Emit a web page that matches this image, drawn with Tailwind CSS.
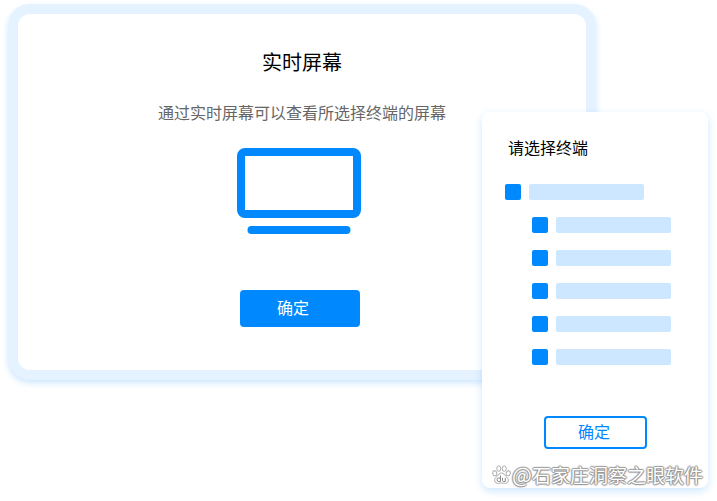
<!DOCTYPE html>
<html lang="zh-CN">

<head>
    <meta charset="UTF-8">
    <meta name="viewport" content="width=device-width, initial-scale=1">
    <title>实时屏幕</title>
    <script src="https://cdn.jsdelivr.net/npm/@tailwindcss/browser@4"></script>
</head>

<body class="bg-white font-['Noto_Sans_CJK_SC',sans-serif]">
    <div class="relative min-h-screen pt-1 pl-2 pr-[121px]">
        <!-- Live screen -->
        <main class="flex flex-col items-center rounded-[22px] border-10 border-[#e5f2ff] bg-white pt-[34px] pb-[43px] shadow-[0_3px_6px_#0088ff33]">
            <h1 class="text-xl leading-7 text-black">实时屏幕</h1>
            <p class="mt-6 text-base leading-6 text-[#666666]">通过实时屏幕可以查看所选择终端的屏幕</p>
            <svg class="mt-6 mr-1.5 h-[86px] w-[124px]" viewBox="0 0 124 86" fill="none" aria-hidden="true">
                <path fill="#0088ff" fill-rule="evenodd" d="M8 0H116a8 8 0 0 1 8 8V62a8 8 0 0 1-8 8H8a8 8 0 0 1-8-8V8a8 8 0 0 1 8-8ZM8 8V62H116V8Z" />
                <rect x="10.500" y="78" width="103" height="8" rx="4" fill="#0088ff" />
            </svg>
            <button type="button" class="mt-14 mr-1 h-[37px] w-[120px] rounded bg-[#0088ff] pr-3.5 pb-1 text-base leading-6 text-white">确定</button>
        </main>

        <!-- Terminal picker -->
        <form class="absolute top-28 right-[9px] w-[226px] rounded-lg bg-white pt-[23px] pb-[39px] shadow-[0_3px_8px_#0088ff33]">
            <h2 class="pl-[26px] text-base leading-6 text-black">请选择终端</h2>
            <ul class="mt-[25px] flex flex-col gap-[17px] pl-[23px]">
                <li class="flex gap-2">
                    <input id="group" type="checkbox" class="size-4 appearance-none rounded-xs bg-[#0088ff]">
                    <label for="group" aria-label="全部终端" class="h-4 w-[115px] rounded-xs bg-[#cce7ff]"></label>
                </li>
                <li class="flex gap-2 pl-[27px]">
                    <input id="t1" type="checkbox" class="size-4 appearance-none rounded-xs bg-[#0088ff]">
                    <label for="t1" aria-label="终端 1" class="h-4 w-[115px] rounded-xs bg-[#cce7ff]"></label>
                </li>
                <li class="flex gap-2 pl-[27px]">
                    <input id="t2" type="checkbox" class="size-4 appearance-none rounded-xs bg-[#0088ff]">
                    <label for="t2" aria-label="终端 2" class="h-4 w-[115px] rounded-xs bg-[#cce7ff]"></label>
                </li>
                <li class="flex gap-2 pl-[27px]">
                    <input id="t3" type="checkbox" class="size-4 appearance-none rounded-xs bg-[#0088ff]">
                    <label for="t3" aria-label="终端 3" class="h-4 w-[115px] rounded-xs bg-[#cce7ff]"></label>
                </li>
                <li class="flex gap-2 pl-[27px]">
                    <input id="t4" type="checkbox" class="size-4 appearance-none rounded-xs bg-[#0088ff]">
                    <label for="t4" aria-label="终端 4" class="h-4 w-[115px] rounded-xs bg-[#cce7ff]"></label>
                </li>
                <li class="flex gap-2 pl-[27px]">
                    <input id="t5" type="checkbox" class="size-4 appearance-none rounded-xs bg-[#0088ff]">
                    <label for="t5" aria-label="终端 5" class="h-4 w-[115px] rounded-xs bg-[#cce7ff]"></label>
                </li>
            </ul>
            <button type="button" class="mx-auto mt-[51px] block h-[33px] w-[103px] rounded border-2 border-[#0088ff] bg-white pr-0.5 pb-1 text-base leading-6 text-[#0088ff]">确定</button>

            <!-- Watermark -->
            <div class="absolute right-[5px] bottom-px flex items-center gap-px whitespace-nowrap">
                <svg class="size-[19px]" viewBox="0 0 19 19" fill="#ffffff" stroke="#aaaaaa" stroke-width="1" stroke-linejoin="round" aria-hidden="true">
                    <ellipse cx="2.800" cy="8.300" rx="2" ry="2.600" transform="rotate(-15 2.8 8.3)" />
                    <ellipse cx="6.800" cy="3.600" rx="2" ry="2.800" />
                    <ellipse cx="12.200" cy="3.600" rx="2" ry="2.800" />
                    <ellipse cx="16.200" cy="8.300" rx="2" ry="2.600" transform="rotate(15 16.2 8.3)" />
                    <path d="M9.500 8c2.200 0 2.900 1.800 4.200 3.200 1.400 1.400 3 2.500 2.600 4.700-.4 2-2 2.600-3.800 2.400-1.200-.2-2-.3-3-.3s-1.800.1-3 .3c-1.800.2-3.400-.4-3.800-2.400-.4-2.200 1.200-3.300 2.600-4.700C6.600 9.800 7.300 8 9.500 8Z" />
                    <path fill="none" stroke="#888888" d="M8.500 10.500v6H6.800a1.600 1.600 0 0 1 0-3.500h1.700M10.500 12.800v2.500q0 1.200 1.200 1.200h1.600v-3.700" />
                </svg>
                <span class="text-[19px] leading-6 text-white [text-shadow:0_0_1px_#888,0_0_2px_#888,1px_0_1px_#999,-1px_0_1px_#aaa,0_1px_1px_#999,0_-1px_1px_#aaa]"><span class="text-[21px]">@</span>石家庄洞察之眼软件</span>
            </div>
        </form>
    </div>
</body>

</html>
